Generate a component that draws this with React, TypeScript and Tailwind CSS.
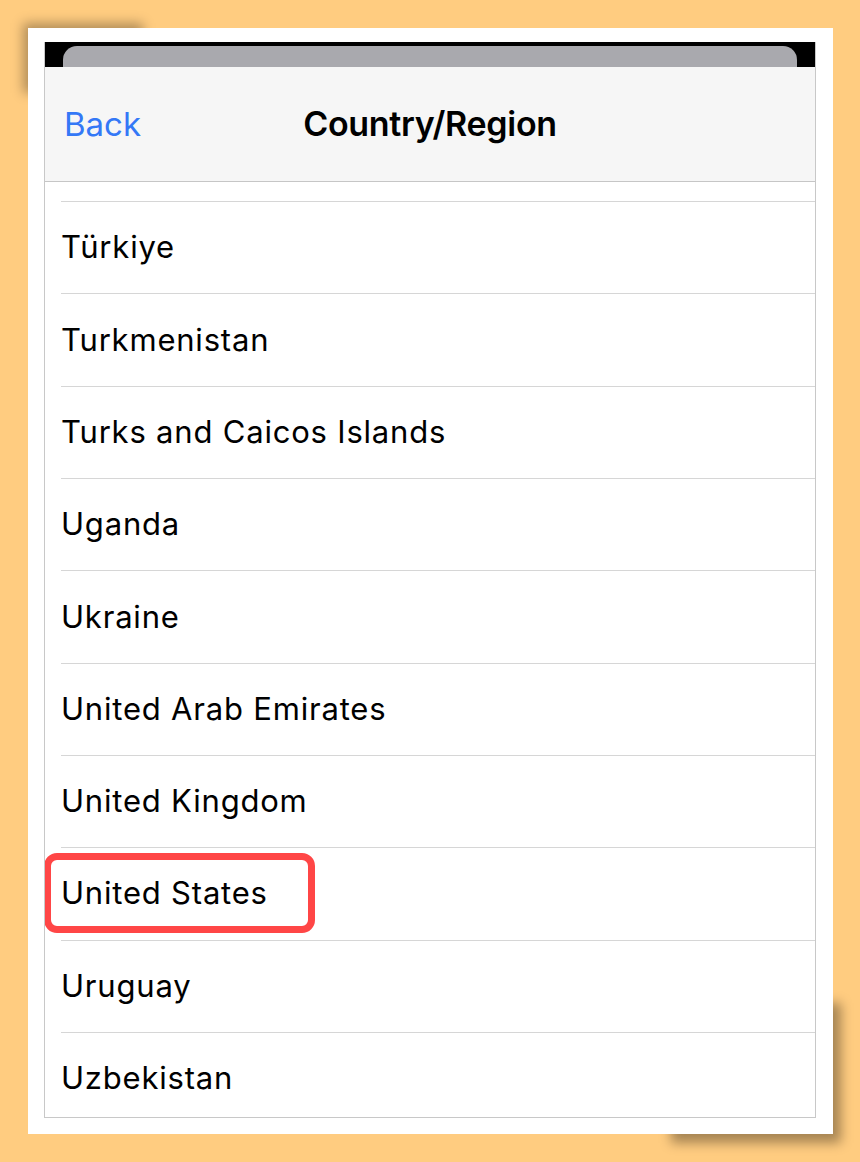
import React from "react";

const rows = [
  "Türkiye",
  "Turkmenistan",
  "Turks and Caicos Islands",
  "Uganda",
  "Ukraine",
  "United Arab Emirates",
  "United Kingdom",
  "United States",
  "Uruguay",
  "Uzbekistan",
];

export default function App() {
  return (
    <div
      className="w-[860px] h-[1162px] bg-[#ffcc80] pt-[28px] pl-[28px] overflow-hidden"
      style={{ fontFamily: "Inter, 'Liberation Sans', sans-serif" }}
    >
      <div className="relative w-[805px] h-[1106px]">
        {/* paper curl shadows */}
        <div className="absolute left-[-5px] top-[-5px] w-[120px] h-[70px] bg-black/30 blur-[6px]" />
        <div className="absolute right-[-8px] bottom-[-9px] w-[170px] h-[140px] bg-black/35 blur-[6px]" />
        <div className="relative bg-white w-full h-full pt-[14px] px-[16px]">
          <div className="w-[772px] h-[1076px] border-x border-b border-[#c8c8c8] overflow-hidden flex flex-col bg-white">
            <div className="h-[25px] bg-black shrink-0 pt-[4px] px-[18px]">
              <div className="h-[21px] rounded-t-[14px] bg-[#a9a9ae]" />
            </div>
            <div className="relative h-[115px] shrink-0 bg-[#f6f6f6] border-b border-[#c6c6c6] flex items-center justify-center">
              <span className="absolute left-[19px] top-[37px] text-[33px] leading-[40px] text-[#3478f6]">Back</span>
              <span className="text-[34px] leading-[40px] font-semibold text-black tracking-[-0.3px] mt-[-1px]">
                Country/Region
              </span>
            </div>
            <div className="h-[19px] shrink-0" />
            {rows.map((r) => (
              <div key={r} className="shrink-0 pl-[16px]">
                <div className="h-[92.33px] border-t border-[#d6d6d6] flex items-center">
                  {r === "United States" ? (
                    <div className="ml-[-17px] mt-[-1px] w-[271px] h-[80px] rounded-[13px] border-[7px] border-[#ff4646] flex items-center pl-[10px]">
                      <span className="text-[31px] text-black tracking-[0.8px]">{r}</span>
                    </div>
                  ) : (
                    <span className="text-[31px] text-black tracking-[0.8px]">{r}</span>
                  )}
                </div>
              </div>
            ))}
          </div>
        </div>
      </div>
    </div>
  );
}
